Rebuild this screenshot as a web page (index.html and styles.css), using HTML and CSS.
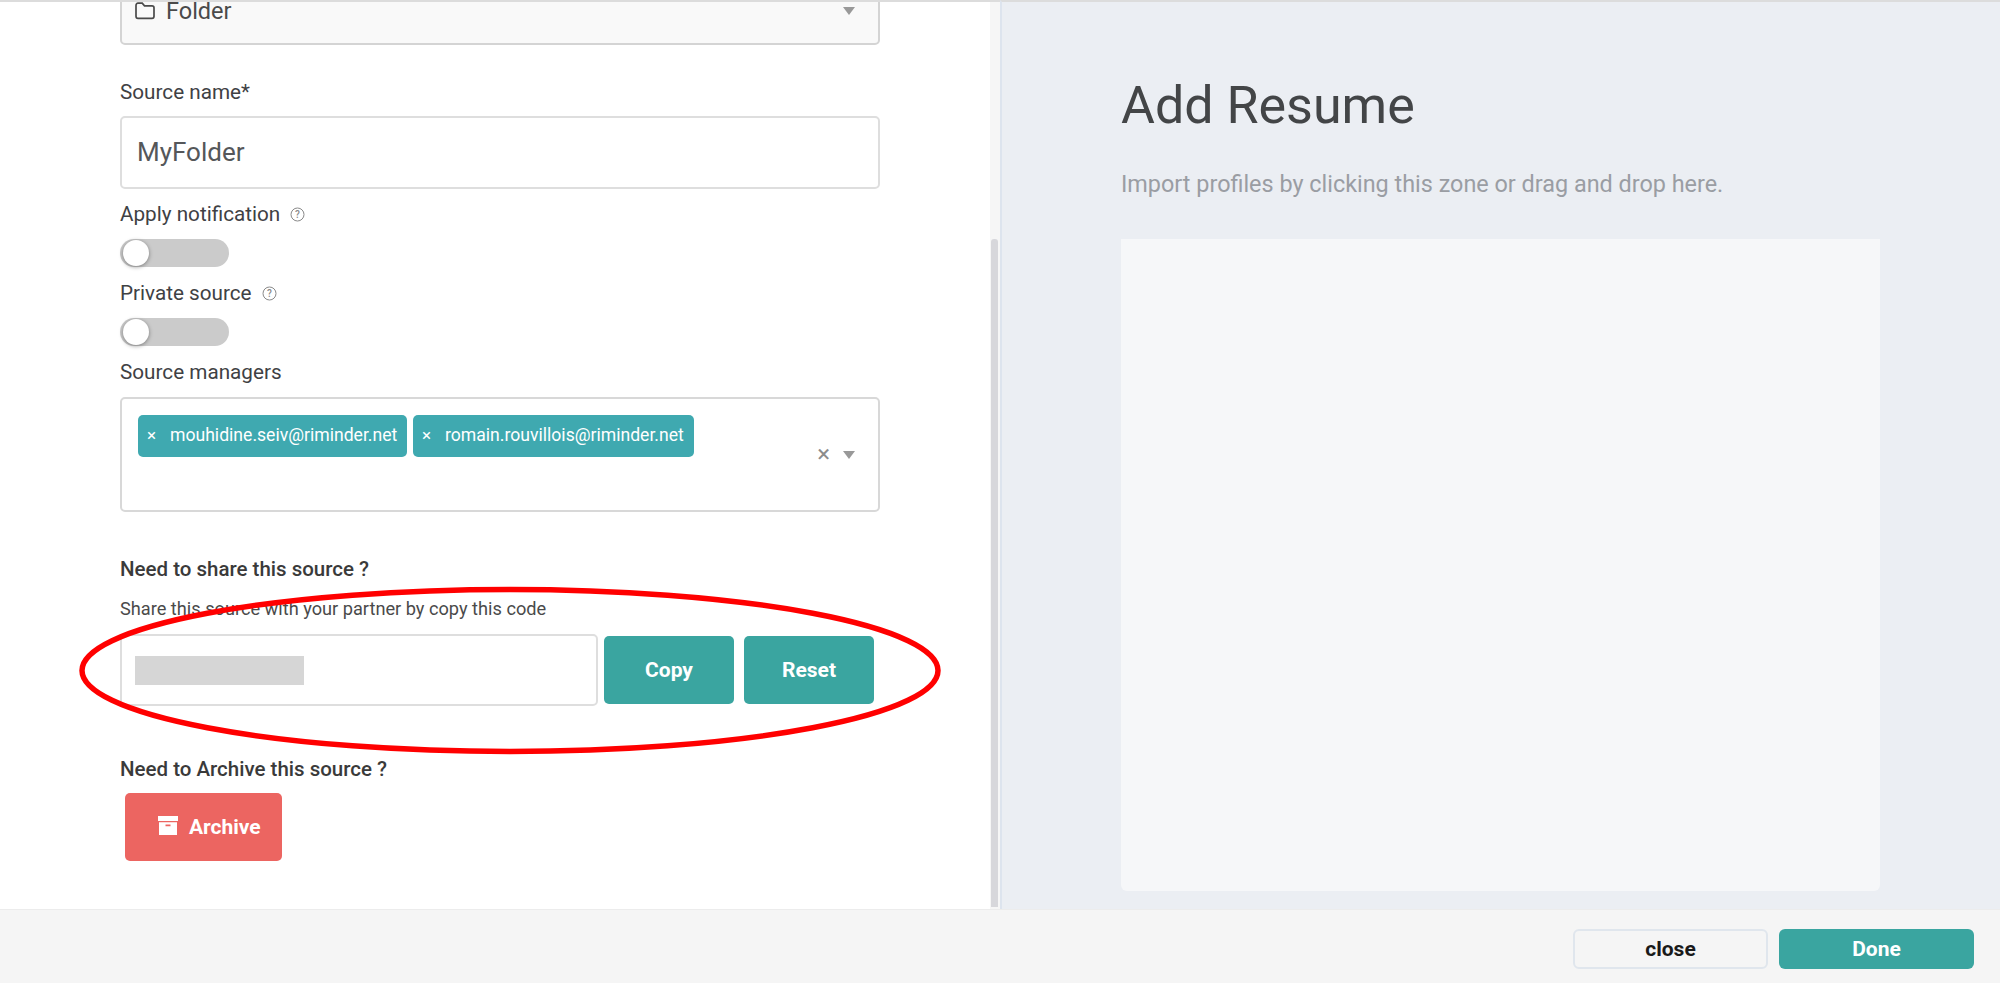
FILE: index.html
```html
<!DOCTYPE html>
<html lang="en">
<head>
<meta charset="utf-8">
<title>Add Resume</title>
<link rel="stylesheet" href="styles.css">
</head>
<body>
<div class="main">
  <section class="left">
    <form class="form">
      <div class="field select">
        <span class="select-value">
          <svg class="folder" width="22" height="18" viewBox="0 0 20 18" fill="none" stroke="#4a4a4a" stroke-width="1.7"><path d="M1 3.5C1 2.1 1.9 1.2 3 1.2h4.2l2.3 2.6H17c1.2 0 2 .8 2 2v8.4c0 1.3-.8 2.1-2 2.1H3c-1.200 0-2-.8-2-2.100z"/></svg>
          Folder
        </span>
        <span class="arrow"></span>
      </div>
      <label class="label l-name">Source name*</label>
      <div class="field name">MyFolder</div>
      <label class="label l-apply">Apply notification
        <svg class="help" width="15" height="15" viewBox="0 0 15 15"><circle cx="7.500" cy="7.500" r="6.500" fill="none" stroke="#8a8a8a" stroke-width="1"/><text x="7.500" y="11" text-anchor="middle" class="help-q">?</text></svg>
      </label>
      <div class="toggle"><span class="knob"></span></div>
      <label class="label l-private">Private source
        <svg class="help" width="15" height="15" viewBox="0 0 15 15"><circle cx="7.500" cy="7.500" r="6.500" fill="none" stroke="#8a8a8a" stroke-width="1"/><text x="7.500" y="11" text-anchor="middle" class="help-q">?</text></svg>
      </label>
      <div class="toggle"><span class="knob"></span></div>
      <label class="label l-managers">Source managers</label>
      <div class="field managers">
        <div class="chips">
          <span class="chip c1"><i>×</i>mouhidine.seiv@riminder.net</span>
          <span class="chip c2"><i>×</i>romain.rouvillois@riminder.net</span>
        </div>
        <span class="clear">×</span>
        <span class="arrow"></span>
      </div>
      <h4 class="heading h-share">Need to share this source ?</h4>
      <p class="hint">Share this source with your partner by copy this code</p>
      <div class="share-row">
        <div class="field code"><span class="redact"></span></div>
        <button type="button" class="btn teal copy">Copy</button>
        <button type="button" class="btn teal reset">Reset</button>
      </div>
      <h4 class="heading h-archive">Need to Archive this source ?</h4>
      <button type="button" class="btn archive">
        <svg width="20" height="19" viewBox="0 0 20 19" fill="#fff"><rect x="0" y="0" width="20" height="5"/><path d="M1 6.300h18V19H1zM7.500 8.500v1.700h5V8.500z" fill-rule="evenodd"/></svg>
        Archive
      </button>
    </form>
    <svg class="ring" width="870" height="175" viewBox="0 0 870 175"><ellipse cx="435" cy="87.500" rx="428" ry="81" fill="none" stroke="#f00" stroke-width="5.500"/></svg>
  </section>
  <div class="track"><span class="thumb"></span></div>
  <section class="right">
    <h1 class="title">Add Resume</h1>
    <p class="sub">Import profiles by clicking this zone or drag and drop here.</p>
    <div class="drop"></div>
  </section>
</div>
<footer class="footer">
  <button type="button" class="fbtn close">close</button>
  <button type="button" class="fbtn done">Done</button>
</footer>
</body>
</html>
```
FILE: styles.css
```css
* { box-sizing: border-box; }
html, body { margin: 0; height: 983px; overflow: hidden; }
body {
  font-family: Roboto, "Liberation Sans", sans-serif;
  color: #3f4144;
  background: #fff;
  display: flex;
  flex-direction: column;
}
.main { display: flex; height: 909px; flex: none; }
.left { position: relative; width: 990px; flex: none; overflow: hidden; padding-left: 120px; border-top: 2px solid #dcdcdc; }
.form { width: 760px; margin-top: -31px; display: flex; flex-direction: column; align-items: flex-start; }
.field { width: 100%; border: 2px solid #dedede; border-radius: 5px; background: #fff; }
.select {
  height: 74px;
  background: #f9f9f9;
  border-color: #d4d4d4;
  display: flex;
  justify-content: space-between;
  padding: 27px 23px 0 12px;
}
.select-value { display: flex; align-items: center; gap: 10px; font-size: 23.500px; line-height: 22px; height: 22px; color: #4a4a4a; }
.arrow { width: 0; height: 0; border: 6.500px solid transparent; border-top: 8px solid #999; border-bottom: 0; margin-top: 7px; }
.label { font-size: 20.700px; line-height: 24px; display: flex; align-items: center; gap: 10px; }
.l-name { margin-top: 35px; }
.name { height: 73px; margin-top: 12px; font-size: 26px; line-height: 69px; padding-left: 15px; color: #55575a; }
.l-apply { margin-top: 13px; }
.l-private { margin-top: 14px; }
.l-managers { margin-top: 14px; }
.toggle { width: 109px; height: 28px; border-radius: 14px; background: #cbcbcb; margin-top: 13px; position: relative; }
.knob { position: absolute; left: 3px; top: 1px; width: 26px; height: 26px; border-radius: 50%; background: #fff; box-shadow: 0 1px 4px rgba(0,0,0,.4); }
.help-q { font: 500 10px Roboto, sans-serif; fill: #8a8a8a; }
.managers { height: 115px; margin-top: 13px; padding: 16px 23px 0 16px; display: flex; align-items: flex-start; border-color: #d8d8d8; }
.chips { display: flex; gap: 6px; flex: 1; }
.chip { height: 42px; border-radius: 5px; background: #3fa9b0; color: #fff; font-size: 17.600px; line-height: 40px; display: flex; }
.chip i { font-style: normal; width: 32px; padding-left: 9px; font-size: 17px; }
.c1 { width: 269px; }
.c2 { width: 281px; }
.clear { font-size: 24px; line-height: 24px; color: #8c8c8c; margin: 27px 13px 0 0; }
.managers .arrow { margin-top: 36px; }
.heading { margin: 0; font-size: 20.500px; font-weight: 500; line-height: 24px; color: #3a3a3a; }
.h-share { margin-top: 45px; }
.hint { margin: 17px 0 0; font-size: 18.200px; line-height: 22px; color: #4a4a4a; }
.share-row { display: flex; align-items: center; width: 100%; margin-top: 14px; }
.code { width: 478px; height: 72px; padding: 20px 0 0 13px; border-color: #dedede; }
.redact { display: block; width: 169px; height: 29px; background: #d6d6d6; }
.btn { border: 0; border-radius: 5px; color: #fff; font: 700 21px Roboto, sans-serif; padding: 0; }
.teal { width: 130px; height: 68px; background: #3aa5a0; }
.copy { margin-left: 6px; }
.reset { margin-left: 10px; }
.h-archive { margin-top: 51px; }
.archive { width: 157px; height: 68px; margin: 12px 0 0 5px; background: #ec6561; display: flex; align-items: center; justify-content: flex-start; gap: 11px; padding-left: 33px; }
.archive svg { margin-top: -4px; }
.ring { position: absolute; left: 75px; top: 581px; }
.track { width: 10px; flex: none; background: #f6f6f6; padding: 239px 2px 0 1px; border-top: 2px solid #dcdcdc; }
.thumb { display: block; height: 100%; background: #d7d7db; border-radius: 3px 3px 0 0; margin-top: -2px; }
.right { flex: 1; background: #ebeef3; border-left: 2px solid #dde4ee; border-top: 2px solid #dcdcdc; padding: 0 120px 18px 119px; display: flex; flex-direction: column; }
.title { margin: 74px 0 0; font-size: 52px; font-weight: 400; line-height: 60px; color: #434547; }
.sub { margin: 33px 0 0; font-size: 23.400px; line-height: 30px; font-weight: 400; color: #9a9da3; }
.drop { flex: 1; margin-top: 40px; background: #f6f7f9; border-radius: 0 0 6px 6px; }
.footer { flex: 1; background: #f5f5f5; border-top: 1px solid #ececec; display: flex; justify-content: flex-end; gap: 11px; padding: 19px 26px 0 0; }
.fbtn { width: 195px; height: 40px; border-radius: 6px; font: 700 21px Roboto, sans-serif; }
.close { background: #f5f5f5; border: 2px solid #e0e6ed; color: #1a1a1a; }
.done { background: #3aa5a0; border: 0; color: #fff; }
```
